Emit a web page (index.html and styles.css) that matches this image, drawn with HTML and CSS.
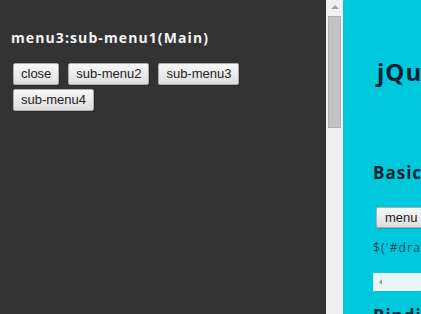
FILE: index.html
```html
<!DOCTYPE html>
<html lang="en">
<head>
    <meta charset="UTF-8">
    <meta name="viewport" content="width=device-width, initial-scale=1.0">
    <title>Drawer menu</title>
    <link rel="stylesheet" href="styles.css">
</head>
<body>
    <div class="drawer">
        <h2>menu3:sub-menu1(Main)</h2>
        <div class="drawer-buttons">
            <button class="btn">close</button>
            <button class="btn">sub-menu2</button>
            <button class="btn">sub-menu3</button>
            <button class="btn">sub-menu4</button>
        </div>
    </div>
    <div class="scrollbar">
        <div class="scroll-arrow"></div>
        <div class="scroll-thumb"></div>
    </div>
    <div class="page">
        <h1>jQuery Drawer Menu</h1>
        <h3>Basic usage</h3>
        <button class="btn">menu</button>
        <p class="code">$('#drawer').drawer();</p>
        <div class="code-scroll"><span class="arrow-left"></span></div>
        <h3 class="next">Binding</h3>
    </div>
</body>
</html>
```

FILE: styles.css
```css
body {
    display: flex;
    height: 100vh;
    margin: 0;
    overflow: hidden;
    background: #00c8dc;
    font-family: 'Open Sans', sans-serif;
}
.drawer {
    width: 326px;
    flex-shrink: 0;
    padding: 0 11px;
    box-sizing: border-box;
    background: #333333; /* fundo escuro do menu */
}
.drawer h2 {
    margin: 28px 0 0;
    font-size: 14px;
    line-height: 19px;
    letter-spacing: 1.1px;
    font-weight: bold;
    color: #f4f4f4;
}
.drawer-buttons {
    display: flex;
    flex-wrap: wrap;
    gap: 4px 9px;
    margin-top: 16px;
    padding-left: 2px;
}
.btn {
    height: 22px;
    padding: 0 7px;
    border: 1px solid #adadad;
    border-radius: 2px;
    background: linear-gradient(#f8f8f8, #dddddd);
    box-shadow: 1px 1px 0 rgba(0, 0, 0, 0.15);
    color: #222;
    font-family: 'Liberation Sans', Arial, sans-serif;
    font-size: 13px;
    line-height: 20px;
}
.scrollbar {
    width: 17px;
    flex-shrink: 0;
    display: flex;
    flex-direction: column;
    align-items: center;
    background: #f0f0f0;
}
.scroll-arrow {
    margin-top: 5px;
    width: 0;
    height: 0;
    border-left: 4px solid transparent;
    border-right: 4px solid transparent;
    border-bottom: 4px solid #a3a3a3;
}
.scroll-thumb {
    width: 13px;
    height: 112px;
    margin-top: 7px;
    box-sizing: border-box;
    border: 1px solid #b0b0b0;
    background: #c2c2c2;
}
.page {
    flex: 1;
    padding-left: 30px;
    overflow: hidden;
    white-space: nowrap;
    color: #0b2030;
}
.page h1 {
    margin: 57px 0 0;
    padding-left: 4px;
    font-size: 24px;
    line-height: 30px;
    letter-spacing: 1px;
}
.page h3 {
    margin: 75px 0 0;
    font-size: 17px;
    line-height: 22px;
    letter-spacing: 1px;
}
.page .btn {
    margin: 23px 0 0 3px;
    height: 21px;
    width: 60px;
    text-align: left;
    padding: 0 8px;
}
.code {
    margin: 13px 0 0;
    font-size: 12px;
    letter-spacing: 1.2px;
    line-height: 14px;
    color: #124b57;
}
.code-scroll {
    display: flex;
    align-items: center;
    height: 18px;
    margin-top: 18px;
    padding-left: 6px;
    background: #e9f6f8;
}
.arrow-left {
    width: 0;
    height: 0;
    border-top: 3px solid transparent;
    border-bottom: 3px solid transparent;
    border-right: 3px solid #a0a0a0;
}
.page h3.next {
    margin-top: 14px;
}
```
